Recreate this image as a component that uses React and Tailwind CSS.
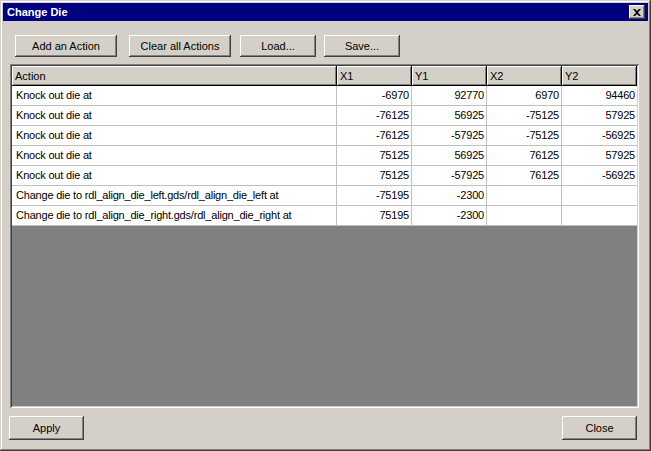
import React from 'react';

const bevel =
    'bg-[#d4d0c8] shadow-[inset_-1px_-1px_#404040,inset_1px_1px_#ffffff,inset_-2px_-2px_#808080,inset_2px_2px_#d4d0c8]';

const rows = [
    ['Knock out die at', '-6970', '92770', '6970', '94460'],
    ['Knock out die at', '-76125', '56925', '-75125', '57925'],
    ['Knock out die at', '-76125', '-57925', '-75125', '-56925'],
    ['Knock out die at', '75125', '56925', '76125', '57925'],
    ['Knock out die at', '75125', '-57925', '76125', '-56925'],
    ['Change die to rdl_align_die_left.gds/rdl_align_die_left at', '-75195', '-2300', '', ''],
    ['Change die to rdl_align_die_right.gds/rdl_align_die_right at', '75195', '-2300', '', ''],
];

const Button = ({ label, className = '' }) => (
    <button className={`${bevel} flex items-center justify-center text-black ${className}`}>
        {label}
    </button>
);

const App = () => {
    return (
        <div className="w-[651px] h-[451px] bg-[#d4d0c8] p-[3px] flex flex-col font-['Liberation_Sans',Arial,sans-serif] text-[11px] text-black shadow-[inset_-1px_-1px_#404040,inset_1px_1px_#d4d0c8,inset_-2px_-2px_#808080,inset_2px_2px_#ffffff]">
            {/* Title bar */}
            <div className="h-[18px] bg-[#000080] flex items-center justify-between pl-[4px] pr-[3px]">
                <span className="text-white font-bold text-[11px] leading-none">Change Die</span>
                <button className={`${bevel} w-[16px] h-[14px] flex items-center justify-center`}>
                    <svg width="8" height="7" viewBox="0 0 8 7">
                        <path d="M0 0h2l2 2 2-2h2L5 3.5 8 7H6L4 5 2 7H0l3-3.5z" fill="#000" />
                    </svg>
                </button>
            </div>

            {/* Toolbar */}
            <div className="flex mt-[14px] ml-[12px]">
                <Button label="Add an Action" className="w-[102px] h-[22px]" />
                <Button label="Clear all Actions" className="w-[102px] h-[22px] ml-[12px]" />
                <Button label="Load..." className="w-[76px] h-[22px] ml-[9px]" />
                <Button label="Save..." className="w-[76px] h-[22px] ml-[8px]" />
            </div>

            {/* List */}
            <div className="mt-[7px] ml-[7px] w-[629px] h-[344px] p-[2px] bg-[#808080] shadow-[inset_1px_1px_#808080,inset_-1px_-1px_#ffffff,inset_2px_2px_#404040,inset_-2px_-2px_#d4d0c8]">
                <div className="grid grid-cols-[325px_75px_75px_75px_75px]">
                    {['Action', 'X1', 'Y1', 'X2', 'Y2'].map((h) => (
                        <div
                            key={h}
                            className="h-[20px] pl-[3px] flex items-center bg-[#d4d0c8] shadow-[inset_-1px_-1px_#000000,inset_1px_1px_#ffffff,inset_-2px_-2px_#808080]"
                        >
                            {h}
                        </div>
                    ))}
                    {rows.map((r, i) =>
                        r.map((c, j) => (
                            <div
                                key={`${i}-${j}`}
                                className={`h-[20px] bg-white border-b border-r border-[#c0c0c0] flex items-center tracking-[-0.2px] ${j === 0 ? 'pl-[4px]' : 'justify-end pr-[2px]'} ${j === 4 ? 'border-r-0' : ''}`}
                            >
                                {c}
                            </div>
                        ))
                    )}
                </div>
            </div>

            {/* Footer */}
            <div className="flex justify-between mt-[8px] ml-[6px] mr-[11px]">
                <Button label="Apply" className="w-[75px] h-[24px]" />
                <Button label="Close" className="w-[75px] h-[24px]" />
            </div>
        </div>
    );
};

export default App;
